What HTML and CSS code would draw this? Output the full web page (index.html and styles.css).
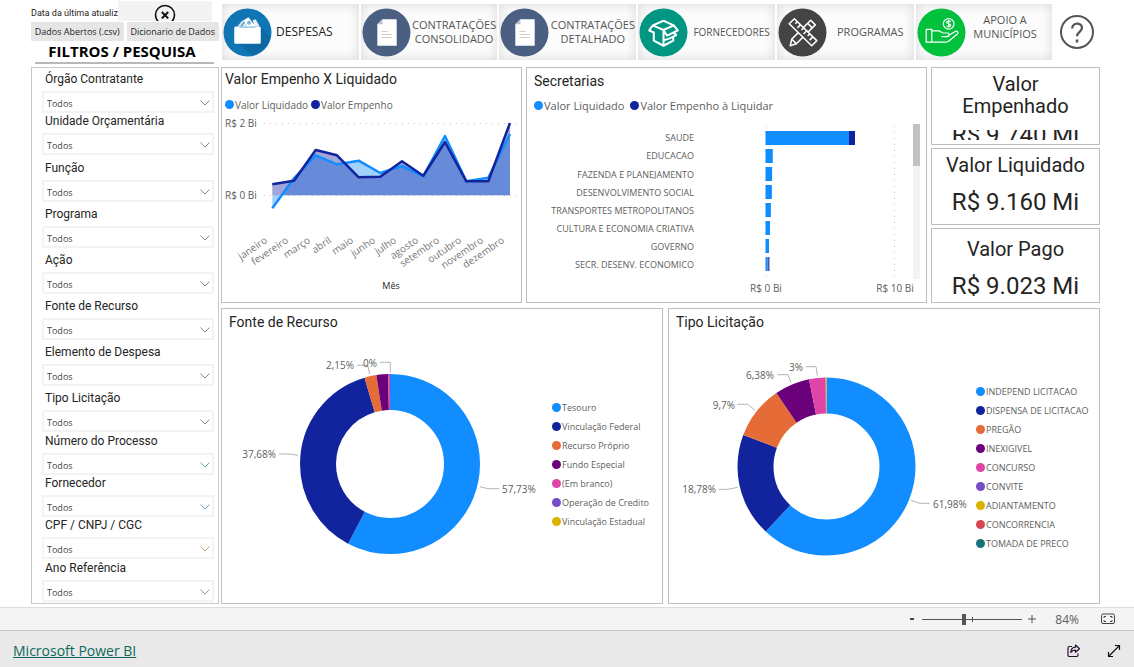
FILE: index.html
```html
<!DOCTYPE html>
<html lang="pt-BR">
<head>
<meta charset="utf-8">
<meta name="viewport" content="width=device-width, initial-scale=1">
<title>Despesas</title>
<link rel="stylesheet" href="styles.css">
</head>
<body>
<main class="report">
  <aside class="side">
    <div class="side-head">
      <div class="update">
        <span class="update-text">Data da última atualiz</span>
        <button class="clear" type="button" aria-label="Limpar filtros">
          <svg width="22" height="22" viewBox="0 0 22 22" fill="none" stroke="#111"><circle cx="11" cy="11" r="9.5" stroke-width="1.6"/><path d="M7.8 8l6.4 6.4M14.2 8l-6.4 6.4" stroke-width="2"/></svg>
        </button>
      </div>
      <div class="downloads">
        <button type="button">Dados Abertos (.csv)</button>
        <button type="button">Dicionario de Dados</button>
      </div>
      <h1 class="side-title">FILTROS / PESQUISA</h1>
    </div>
    <form class="filters">
      <div class="filter filter--flush"><label for="f1">Órgão Contratante</label><div class="pick"><select id="f1"><option>Todos</option></select><svg viewBox="0 0 10 6"><path d="M.5.5L5 5 9.500.5"/></svg></div></div>
      <div class="filter filter--flush"><label for="f2">Unidade Orçamentária</label><div class="pick"><select id="f2"><option>Todos</option></select><svg viewBox="0 0 10 6"><path d="M.5.5L5 5 9.500.5"/></svg></div></div>
      <div class="filter filter--wide"><label for="f3">Função</label><div class="pick"><select id="f3"><option>Todos</option></select><svg viewBox="0 0 10 6"><path d="M.5.5L5 5 9.500.5"/></svg></div></div>
      <div class="filter"><label for="f4">Programa</label><div class="pick"><select id="f4"><option>Todos</option></select><svg viewBox="0 0 10 6"><path d="M.5.5L5 5 9.500.5"/></svg></div></div>
      <div class="filter"><label for="f5">Ação</label><div class="pick"><select id="f5"><option>Todos</option></select><svg viewBox="0 0 10 6"><path d="M.5.5L5 5 9.500.5"/></svg></div></div>
      <div class="filter"><label for="f6">Fonte de Recurso</label><div class="pick"><select id="f6"><option>Todos</option></select><svg viewBox="0 0 10 6"><path d="M.5.5L5 5 9.500.5"/></svg></div></div>
      <div class="filter"><label for="f7">Elemento de Despesa</label><div class="pick"><select id="f7"><option>Todos</option></select><svg viewBox="0 0 10 6"><path d="M.5.5L5 5 9.500.5"/></svg></div></div>
      <div class="filter"><label for="f8">Tipo Licitação</label><div class="pick"><select id="f8"><option>Todos</option></select><svg viewBox="0 0 10 6"><path d="M.5.5L5 5 9.500.5"/></svg></div></div>
      <div class="filter filter--tight"><label for="f9">Número do Processo</label><div class="pick pick--blue"><select id="f9"><option>Todos</option></select><svg viewBox="0 0 10 6"><path d="M.5.5L5 5 9.500.5"/></svg></div></div>
      <div class="filter filter--flush"><label for="f10">Fornecedor</label><div class="pick pick--blue"><select id="f10"><option>Todos</option></select><svg viewBox="0 0 10 6"><path d="M.5.5L5 5 9.500.5"/></svg></div></div>
      <div class="filter filter--flush"><label for="f11">CPF / CNPJ / CGC</label><div class="pick pick--tan"><select id="f11"><option>Todos</option></select><svg viewBox="0 0 10 6"><path d="M.5.5L5 5 9.500.5"/></svg></div></div>
      <div class="filter filter--tight"><label for="f12">Ano Referência</label><div class="pick pick--blue"><select id="f12"><option>Todos</option></select><svg viewBox="0 0 10 6"><path d="M.5.5L5 5 9.500.5"/></svg></div></div>
    </form>
  </aside>

  <div class="content">
    <nav class="tabs">
      <button class="tab tab--active" type="button">
        <svg viewBox="0 0 48 48"><circle cx="24" cy="24" r="23.500" fill="#0f75b5"/><path d="M37 19l9.500 9.500A23.500 23.500 0 0 1 29 46L14 34z" fill="#0d68a3"/><path d="M18 18l4-5 4 5zM14 18l5-6 2 1-4 5z" fill="#cfe3f0"/><path d="M20 12l5-3 7 9h-8z" fill="#fff"/><path d="M29 12l3-1 4 7h-5z" fill="#e8f1f7"/><circle cx="25.500" cy="14.500" r="2" fill="#7fb4d6"/><rect x="11" y="18" width="26" height="17" rx="1.500" fill="#fff"/><path d="M16 19h16" stroke="#9cc7e3"/></svg>
        <span>DESPESAS</span>
      </button>
      <button class="tab" type="button">
        <svg viewBox="0 0 48 48"><circle cx="24" cy="24" r="23.500" fill="#4b5f83"/><path d="M20 11h14v26H15V16z" fill="#fff"/><path d="M20 11v5h-5z" fill="#b9c0cc"/><path d="M19 23h6M19 26h10M19 29h10" stroke="#ccc"/></svg>
        <span>CONTRATAÇÕES CONSOLIDADO</span>
      </button>
      <button class="tab" type="button">
        <svg viewBox="0 0 48 48"><circle cx="24" cy="24" r="23.500" fill="#4b5f83"/><path d="M20 11h14v26H15V16z" fill="#fff"/><path d="M20 11v5h-5z" fill="#b9c0cc"/><path d="M19 23h6M19 26h10M19 29h10" stroke="#ccc"/></svg>
        <span>CONTRATAÇÕES DETALHADO</span>
      </button>
      <button class="tab tab--small" type="button">
        <svg viewBox="0 0 48 48"><circle cx="24" cy="24" r="23.500" fill="#009682"/><g fill="none" stroke="#fff" stroke-width="2" stroke-linejoin="round"><path d="M24 12.500L13.500 17 10 22l4.500 2v8L24 37l9.500-5v-4.500M24 12.500L34 17l-10 4.500L13.500 17M24 21.500V37M24 22l3.500 5L38 22l-4-5M24.500 31.500l5-1.500 7-3.500-3-2.500"/></g></svg>
        <span>FORNECEDORES</span>
      </button>
      <button class="tab" type="button">
        <svg viewBox="0 0 48 48"><circle cx="24" cy="24" r="23.500" fill="#444"/><g fill="none" stroke="#fff" stroke-width="1.500" stroke-linejoin="round"><path d="M32 12l4.500 4.500L18 35l-6 2 1.500-6.500zM29 15l4.500 4.500M13.500 30.500L18 35"/><path d="M11 15.500l5-5L38 32l-5 5z" fill="#444"/><path d="M19 13.500l-2 2M22 16.500l-3 3M25 19.500l-2 2M28 22.500l-3 3M31 25.500l-2 2M34 28.500l-3 3"/></g></svg>
        <span>PROGRAMAS</span>
      </button>
      <button class="tab tab--raised" type="button">
        <svg viewBox="0 0 48 48"><circle cx="24" cy="24" r="23.500" fill="#00c03c"/><g fill="none" stroke="#fff" stroke-width="1.200" stroke-linejoin="round"><circle cx="31" cy="15.500" r="5.200"/><path d="M33 13.500c-1-1-4-1-4 .5s4 1.500 4 3-3 1.500-4 .5M31 11.800v7.400"/><path d="M9 21h5.500v12.500H9zM14.500 22.500H21c2 0 3 2 5 2h4c2 0 2 3.500 0 3.500h-6M30 27.500l7.500-4.500c2-1 3.500 1 2 2.500L31 32.500c-1 1-2 1-4 1H14.500"/></g></svg>
        <span>APOIO A MUNICÍPIOS</span>
      </button>
      <button class="help" type="button" aria-label="Ajuda">
        <svg viewBox="0 0 36 36" fill="none" stroke="#555"><circle cx="18" cy="18" r="16" stroke-width="2"/><path d="M13.200 14.500c0-6.500 9.800-6.500 9.800-.7 0 4-5 4-5 8.500" stroke-width="2.300"/><path d="M18 25.500v3" stroke-width="2.600"/></svg>
      </button>
    </nav>

    <div class="row row--top">
      <section class="panel">
        <h2>Valor Empenho X Liquidado</h2>
        <ul class="legend legend--line"><li class="c-blue">Valor Liquidado</li><li class="c-navy">Valor Empenho</li></ul>
        <svg class="chart" viewBox="0 0 299 190">
          <path class="grid-line" d="M42 11.500H296M42 83.500H296"/>
          <polygon class="f-blue area" points="50.300,83.300 50.300,96.300 72,66.300 93.700,43.300 115,52.300 136.700,48.700 158.300,61 180,54 201.300,64.300 223,24 244.300,69.300 266.300,65.700 288,22 288,83.300"/>
          <polygon class="f-navy area" points="50.300,83.300 50.300,72.300 72,68.700 93.700,38 115,43.300 136.700,65.300 158.300,64.700 180,49.300 201.300,63.700 223,30 244.300,69.300 266.300,69.300 288,11 288,83.300"/>
          <polyline class="line s-blue" points="50.300,96.300 72,66.300 93.700,43.300 115,52.300 136.700,48.700 158.300,61 180,54 201.300,64.300 223,24 244.300,69.300 266.300,65.700 288,22"/>
          <polyline class="line s-navy" points="50.300,72.300 72,68.700 93.700,38 115,43.300 136.700,65.300 158.300,64.700 180,49.300 201.300,63.700 223,30 244.300,69.300 266.300,69.300 288,11"/>
          <text x="3" y="15">R$ 2 Bi</text><text x="3" y="87">R$ 0 Bi</text>
          <g class="months">
            <text transform="translate(46 130) rotate(-34)">janeiro</text>
            <text transform="translate(67 130) rotate(-34)">fevereiro</text>
            <text transform="translate(89 130) rotate(-34)">março</text>
            <text transform="translate(110 130) rotate(-34)">abril</text>
            <text transform="translate(132 130) rotate(-34)">maio</text>
            <text transform="translate(154 130) rotate(-34)">junho</text>
            <text transform="translate(175 130) rotate(-34)">julho</text>
            <text transform="translate(197 130) rotate(-34)">agosto</text>
            <text transform="translate(218 130) rotate(-34)">setembro</text>
            <text transform="translate(240 130) rotate(-34)">outubro</text>
            <text transform="translate(262 130) rotate(-34)">novembro</text>
            <text transform="translate(283 130) rotate(-34)">dezembro</text>
          </g>
          <text class="axis-title" x="169" y="177">Mês</text>
        </svg>
      </section>

      <section class="panel">
        <h2 class="inset">Secretarias</h2>
        <ul class="legend legend--line legend--large"><li class="c-blue">Valor Liquidado</li><li class="c-navy">Valor Empenho à Liquidar</li></ul>
        <svg class="chart" viewBox="0 0 399 187">
          <path class="grid-line" d="M239 11V164M367.500 11V164"/>
          <g class="end names">
            <text x="167" y="26">SAUDE</text><text x="167" y="44">EDUCACAO</text><text x="167" y="63">FAZENDA E PLANEJAMENTO</text><text x="167" y="81">DESENVOLVIMENTO SOCIAL</text><text x="167" y="99">TRANSPORTES METROPOLITANOS</text><text x="167" y="117">CULTURA E ECONOMIA CRIATIVA</text><text x="167" y="135">GOVERNO</text><text x="167" y="153">SECR. DESENV. ECONOMICO</text>
          </g>
          <path class="f-blue" d="M238.500 16h83.500v14h-83.500zM238.500 34h7.300v14h-7.300zM238.500 52h6.600v14h-6.600zM238.500 70h6.400v14h-6.400zM238.500 88h5.400v14h-5.400zM238.500 106h4.500v14h-4.500zM238.500 124h3.500v14h-3.500zM238.500 142h2v14h-2z"/>
          <path class="f-navy" d="M322 16h6v14h-6z"/><path fill="#4a54b4" d="M240.500 142h2v14h-2z"/>
          <text class="mid" x="239" y="177">R$ 0 Bi</text><text class="mid" x="368" y="177">R$ 10 Bi</text>
          <path fill="#f3f3f3" d="M386 9h7v155h-7z"/><path fill="#c2c2c2" d="M386 9h7v42h-7z"/>
        </svg>
      </section>

      <div class="cards">
        <section class="card"><h2>Valor Empenhado</h2><p class="value value--cut"><span>R$ 9.740 Mi</span></p></section>
        <section class="card"><h2>Valor Liquidado</h2><p class="value">R$ 9.160 Mi</p></section>
        <section class="card card--low"><h2>Valor Pago</h2><p class="value">R$ 9.023 Mi</p></section>
      </div>
    </div>

    <div class="row row--bottom">
      <section class="panel">
        <h2 class="inset">Fonte de Recurso</h2>
        <div class="donut donut--fonte">
          <svg class="chart" viewBox="0 0 330 268">
            <g class="ring" stroke-width="36" transform="rotate(-90 168 129)">
              <circle class="s-blue" cx="168" cy="129" r="72" pathLength="100" stroke-dasharray="57.730 100"/>
              <circle class="s-navy" cx="168" cy="129" r="72" pathLength="100" stroke-dasharray="37.680 100" stroke-dashoffset="-57.730"/>
              <circle class="s-orange" cx="168" cy="129" r="72" pathLength="100" stroke-dasharray="2.150 100" stroke-dashoffset="-95.410"/>
              <circle class="s-purple" cx="168" cy="129" r="72" pathLength="100" stroke-dasharray="2.100 100" stroke-dashoffset="-97.560"/>
              <circle class="s-pink" cx="168" cy="129" r="72" pathLength="100" stroke-dasharray=".34 100" stroke-dashoffset="-99.660"/>
            </g>
            <path class="lead" d="M258 151.700l7.700 2H277M57 119h11l8 1.300M135.300 30.300h10.400l2 8.700M158 27.300h10.300v10"/>
            <text x="280" y="158">57,73%</text><text class="end" x="54" y="123">37,68%</text><text class="end" x="132" y="34">2,15%</text><text x="141" y="32">0%</text>
          </svg>
          <ul class="legend legend--side"><li class="c-blue">Tesouro</li><li class="c-navy">Vinculação Federal</li><li class="c-orange">Recurso Próprio</li><li class="c-purple">Fundo Especial</li><li class="c-pink">(Em branco)</li><li class="c-violet">Operação de Credito</li><li class="c-gold">Vinculação Estadual</li></ul>
        </div>
      </section>
      <section class="panel">
        <h2 class="inset">Tipo Licitação</h2>
        <div class="donut donut--tipo">
          <svg class="chart" viewBox="0 0 307 268">
            <g class="ring" stroke-width="36" transform="rotate(-90 157.500 131.500)">
              <circle class="s-blue" cx="157.500" cy="131.500" r="71" pathLength="100" stroke-dasharray="61.980 100"/>
              <circle class="s-navy" cx="157.500" cy="131.500" r="71" pathLength="100" stroke-dasharray="18.780 100" stroke-dashoffset="-61.980"/>
              <circle class="s-orange" cx="157.500" cy="131.500" r="71" pathLength="100" stroke-dasharray="9.700 100" stroke-dashoffset="-80.760"/>
              <circle class="s-purple" cx="157.500" cy="131.500" r="71" pathLength="100" stroke-dasharray="6.380 100" stroke-dashoffset="-90.460"/>
              <circle class="s-pink" cx="157.500" cy="131.500" r="71" pathLength="100" stroke-dasharray="3 100" stroke-dashoffset="-96.840"/>
              <circle class="s-gold" cx="157.500" cy="131.500" r="71" pathLength="100" stroke-dasharray=".16 100" stroke-dashoffset="-99.840"/>
            </g>
            <path class="lead" d="M242 165.300l8.300 3h10.400M49.700 154.300h9.600l9.400-2M68.300 69.300h10.400l7.300 6M108.300 39.700H119l3 8M136.700 31.700H147l1.300 9"/>
            <text x="264" y="173">61,98%</text><text class="end" x="47" y="158">18,78%</text><text class="end" x="66" y="74">9,7%</text><text class="end" x="105" y="44">6,38%</text><text class="end" x="134" y="36">3%</text>
          </svg>
          <ul class="legend legend--side"><li class="c-blue">INDEPEND LICITACAO</li><li class="c-navy">DISPENSA DE LICITACAO</li><li class="c-orange">PREGÃO</li><li class="c-purple">INEXIGIVEL</li><li class="c-pink">CONCURSO</li><li class="c-violet">CONVITE</li><li class="c-gold">ADIANTAMENTO</li><li class="c-red">CONCORRENCIA</li><li class="c-teal">TOMADA DE PRECO</li></ul>
        </div>
      </section>
    </div>
  </div>
</main>

<div class="status">
  <button type="button" aria-label="Diminuir zoom"><svg width="8" height="12" viewBox="0 0 8 12"><path d="M2 6h4" stroke="#444" stroke-width="2"/></svg></button>
  <input class="zoom" type="range" min="10" max="150" value="68" aria-label="Zoom">
  <button type="button" aria-label="Aumentar zoom"><svg width="8" height="12" viewBox="0 0 8 12"><path d="M0 6h8M4 2v8" stroke="#555"/></svg></button>
  <span class="percent">84%</span>
  <button type="button" aria-label="Ajustar à página"><svg width="14" height="12" viewBox="0 0 14 12" fill="none" stroke="#444"><rect x=".5" y="1" width="13" height="9.500" rx="1.500"/><path d="M3 5V3.500h2M9 3.500h2V5M11 7v1.500H9M5 8.500H3V7"/></svg></button>
</div>
<footer class="footer">
  <a href="#">Microsoft Power BI</a>
  <div class="actions">
    <button type="button" aria-label="Compartilhar"><svg width="14" height="14" viewBox="0 0 14 14" fill="none" stroke="#2a1030" stroke-width="1.200"><path d="M5 2.500H2.500a1.500 1.500 0 0 0-1.500 1.500v7a1.500 1.500 0 0 0 1.500 1.500h7A1.500 1.500 0 0 0 11 11V9.500"/><path d="M8.500 1l4 3.700-4 3.600V6.200C6 6 4.800 7 3.800 8.500 4 5.500 5.500 3.300 8.500 3.200z" stroke-linejoin="round"/></svg></button>
    <button type="button" aria-label="Tela cheia"><svg width="14" height="14" viewBox="0 0 14 14" fill="none" stroke="#111" stroke-width="1.200"><path d="M1.500 12.500l11-11M8 1.500h4.500V6M1.500 8v4.500H6"/></svg></button>
  </div>
</footer>
</body>
</html>
```
FILE: styles.css
```css
* { box-sizing: border-box; }

:root {
  --blue: #118dff;
  --navy: #12239e;
  --orange: #e66c37;
  --purple: #6b007b;
  --pink: #e044a7;
  --violet: #744ec2;
  --gold: #d9b300;
  --red: #d64550;
  --teal: #197278;
  --frame: #bebebe;
}

body {
  margin: 0;
  min-height: 100vh;
  display: flex;
  flex-direction: column;
  background: #fff;
  color: #252423;
  font-family: "Open Sans", "Noto Sans", sans-serif;
  font-size: 10px;
}

button {
  font: inherit;
  color: inherit;
  border: 0;
  padding: 0;
  background: none;
  cursor: pointer;
}

h1, h2, p, ul { margin: 0; padding: 0; }
ul { list-style: none; }
svg { display: block; }

.report {
  display: grid;
  grid-template-columns: 188px minmax(0, 1fr);
  gap: 2px;
  padding: 0 34px 3px 31px;
}

/* sidebar */
.side { display: flex; flex-direction: column; }
.side-head { height: 67px; }

.update { display: flex; height: 21px; padding-top: 1px; }
.update-text { flex: none; font: 9px/24px Roboto, sans-serif; white-space: nowrap; }
.clear {
  width: 94px;
  height: 20px;
  background: #f3f3f3;
  display: flex;
  justify-content: center;
  padding-top: 3px;
  overflow: hidden;
}

.downloads { display: flex; gap: 3px; margin-top: 1px; }
.downloads button {
  flex: 1;
  height: 19px;
  background: #e6e6e6;
  font-size: 9px;
  white-space: nowrap;
}

.side-title {
  margin: 0 5px 0 4px;
  padding-right: 5px;
  border-bottom: 2px solid #b8b8b8;
  font-size: 15px;
  line-height: 21px;
  text-align: center;
  color: #000;
}

.filters {
  flex: 1;
  border: 1px solid #c8c8c8;
  padding: 3px 4px 1px 10px;
}
.filter { margin-top: 4px; }
.filter--wide { margin-top: 5px; }
.filter--tight { margin-top: 1px; }
.filter--flush { margin-top: 0; }
.filter label {
  display: block;
  padding: 0 0 4px 3px;
  font: 12px/16px Roboto, sans-serif;
}
.pick { display: grid; align-items: center; }
.pick > * { grid-area: 1 / 1; }
.pick select {
  appearance: none;
  width: 100%;
  height: 22px;
  border: 2px solid #f3f3f3;
  border-radius: 0;
  background: #fff;
  padding: 2px 3px 0;
  font: 9px "Open Sans", sans-serif;
  color: #444;
}
.pick svg {
  width: 10px;
  height: 6px;
  justify-self: end;
  margin: 2px 4px 0 0;
  fill: none;
  stroke: #888;
  pointer-events: none;
}
.pick--blue svg { stroke: #7aa3bd; }
.pick--tan svg { stroke: #b59a70; }

/* navigation tiles */
.content { display: flex; flex-direction: column; min-width: 0; }
.tabs { display: flex; gap: 2px; height: 67px; padding: 4px 0 7px 1px; }
.tab {
  flex: 137;
  min-width: 0;
  display: flex;
  align-items: center;
  padding-left: 1px;
  background: #fcfcfc;
  box-shadow: inset 0 0 12px #d8d8d8;
  color: #555;
  font-size: 11px;
  line-height: 14px;
}
.tab svg { width: 49px; height: 49px; flex: none; }
.tab span { flex: 1; }
.tab--active { color: #222; font-size: 12px; }
.tab--active span { text-align: left; padding-left: 4px; }
.tab--small { font-size: 10px; }
.tab--raised span { padding: 0 12px 10px 4px; }
.help { flex: 46; display: flex; align-items: center; justify-content: center; }
.help svg { width: 36px; height: 36px; }

/* panels */
.row { display: grid; }
.row--top { grid-template-columns: 301fr 401fr 169fr; gap: 4px; }
.row--bottom { grid-template-columns: 442fr 432fr; gap: 5px; margin-top: 5px; }
.panel { border: 1px solid var(--frame); min-width: 0; }
.panel h2 {
  font: 14px/20px Roboto, sans-serif;
  padding: 1px 0 0 3px;
}
.panel h2.inset { padding: 3px 0 3px 7px; }

.chart { width: 100%; height: auto; }
.chart text { font-size: 10px; fill: #605e5c; }
.chart .names text { font-size: 9px; }
.chart .end, .chart .end text { text-anchor: end; }
.chart .mid { text-anchor: middle; }
.months text { text-anchor: end; fill: #777; }
.chart .axis-title { text-anchor: middle; font-size: 9px; fill: #252423; }
.grid-line { stroke: #c8c8c8; stroke-dasharray: 1 5; fill: none; }
.area { opacity: .4; }
.line { fill: none; stroke-width: 2.5; stroke-linejoin: round; }
.ring { fill: none; }
.lead { fill: none; stroke: #b3b3b3; }

.f-blue { fill: var(--blue); }
.f-navy { fill: var(--navy); }
.s-blue { stroke: var(--blue); }
.s-navy { stroke: var(--navy); }
.s-orange { stroke: var(--orange); }
.s-purple { stroke: var(--purple); }
.s-pink { stroke: var(--pink); }
.s-gold { stroke: var(--gold); }

.legend { color: #605e5c; font-size: 10px; }
.legend li { display: flex; align-items: center; gap: 1px; height: 19px; white-space: nowrap; }
.legend li::before {
  content: "";
  width: 9px;
  height: 9px;
  flex: none;
  border-radius: 50%;
  background: currentColor;
}
.legend--line { display: flex; gap: 3px; padding: 6px 0 0 3px; height: 23px; }
.legend--large { gap: 6px; padding: 2px 0 0 7px; height: 21px; font-size: 11px; }
.legend--side { font-size: 9px; }
.c-blue::before { color: var(--blue); }
.c-navy::before { color: var(--navy); }
.c-orange::before { color: var(--orange); }
.c-purple::before { color: var(--purple); }
.c-pink::before { color: var(--pink); }
.c-violet::before { color: var(--violet); }
.c-gold::before { color: var(--gold); }
.c-red::before { color: var(--red); }
.c-teal::before { color: var(--teal); }

.donut { display: grid; }
.donut--fonte { grid-template-columns: 330fr 110fr; }
.donut--tipo { grid-template-columns: 307fr 123fr; }
.donut--fonte .legend { padding-top: 63px; }
.donut--tipo .legend { padding-top: 47px; }

/* cards */
.cards { display: grid; grid-template-rows: 78fr 77fr 75fr; gap: 3px; }
.card {
  border: 1px solid var(--frame);
  padding: 5px 8px 0;
  text-align: center;
  min-height: 0;
}
.card--low { padding-top: 9px; }
.card h2 { font: 20px/22px Roboto, sans-serif; }
.value { margin-top: 11px; font: 24px/30px Roboto, sans-serif; }
.value--cut { height: 10px; margin-top: 13px; overflow: hidden; display: flex; align-items: center; justify-content: center; }

/* bottom bars */
.status {
  display: flex;
  align-items: center;
  justify-content: flex-end;
  gap: 6px;
  height: 23px;
  padding-right: 19px;
  border-top: 1px solid #dcdcdc;
  background: #f4f4f4;
}
.zoom {
  appearance: none;
  width: 100px;
  height: 12px;
  margin: 0;
  background:
    linear-gradient(#555, #555) 50px 50% / 1px 5px no-repeat,
    linear-gradient(#555, #555) 0 50% / 100% 1px no-repeat;
}
.zoom::-webkit-slider-thumb { appearance: none; width: 4px; height: 11px; background: #555; }
.percent { margin: 0 16px 0 13px; font-size: 12px; color: #605e5c; }

.footer {
  flex: 1;
  display: flex;
  align-items: center;
  justify-content: space-between;
  min-height: 37px;
  padding: 3px 13px 0;
  border-top: 1px solid #c6c6c6;
  background: #e9e9e9;
}
.footer a { color: #0c695a; font-size: 14px; }
.actions { display: flex; gap: 26px; }
```
